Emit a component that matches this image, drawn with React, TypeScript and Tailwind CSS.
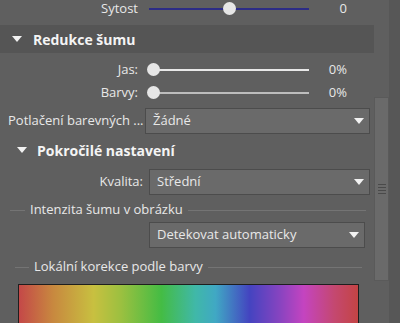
function Caret() {
  return (
    <svg width="10" height="6" viewBox="0 0 10 6" className="shrink-0">
      <path d="M0 0h10L5 6z" fill="#f2f2f2" />
    </svg>
  );
}

function Slider({ pos, line }: { pos: number; line: string }) {
  return (
    <div className="relative h-[14px] w-[162px]">
      <div className={`absolute left-[2px] right-0 top-[6px] h-[2px] ${line}`} />
      <div
        className="absolute top-0 h-[13px] w-[13px] rounded-full bg-[#e6e6e6]"
        style={{ left: pos }}
      />
    </div>
  );
}

function SliderRow({ label, value, pos, line }: { label: string; value: string; pos: number; line: string }) {
  return (
    <div className="flex h-[20px] items-center">
      <div className="w-[140px] pr-[2px] text-right">{label}</div>
      <div className="ml-[7px]">
        <Slider pos={pos} line={line} />
      </div>
      <div className="w-[38px] text-right">{value}</div>
    </div>
  );
}

function Dropdown({ text, className }: { text: string; className: string }) {
  return (
    <div
      className={`flex h-[26px] items-center justify-between border border-[#4c4c4c] bg-[#6a6a6a] pl-[7px] pr-[5px] ${className}`}
    >
      <span>{text}</span>
      <Caret />
    </div>
  );
}

function Divider({ title, lead, className }: { title: string; lead: string; className: string }) {
  return (
    <div className={`flex h-[20px] items-center ${className}`}>
      <div className={`h-px bg-[#747474] ${lead}`} />
      <span className="px-[5px]">{title}</span>
      <div className="h-px flex-1 bg-[#747474]" />
    </div>
  );
}

export default function App() {
  return (
    <div
      className="flex h-[323px] w-[400px] overflow-hidden bg-[#5f5f5f] text-[13px] text-[#e8e8e8]"
      style={{ fontFamily: '"Open Sans", "Noto Sans", sans-serif' }}
    >
      <div className="w-[374px] shrink-0">
        <div className="-mt-[1px]">
          <SliderRow label="Sytost" value="0" pos={76} line="bg-[#2c2c86]" />
        </div>
        <div className="mt-[6px] flex h-[28px] items-center bg-[#555555] pl-[12px]">
          <Caret />
          <span className="ml-[11px] text-[14px] font-bold text-[#f4f4f4]">Redukce šumu</span>
        </div>
        <div className="mt-[7px]">
          <SliderRow label="Jas:" value="0%" pos={0} line="bg-[#e8e8e8]" />
          <div className="mt-[3px]">
            <SliderRow label="Barvy:" value="0%" pos={0} line="bg-[#bdbdbd]" />
          </div>
        </div>
        <div className="mt-[5px] flex items-center">
          <div className="w-[141px] pl-[8px] whitespace-nowrap">Potlačení barevných ...</div>
          <Dropdown text="Žádné" className="ml-[4px] w-[225px]" />
        </div>
        <div className="mt-[6px] flex h-[20px] items-center pl-[17px]">
          <Caret />
          <span className="ml-[10px] text-[14px] font-bold text-[#f4f4f4]">Pokročilé nastavení</span>
        </div>
        <div className="mt-[9px] flex items-center">
          <div className="w-[143px] text-right">Kvalita:</div>
          <Dropdown text="Střední" className="ml-[6px] w-[221px]" />
        </div>
        <Divider title="Intenzita šumu v obrázku" lead="ml-[10px] w-[15px]" className="mt-[5px] mr-[8px]" />
        <div className="mt-[2px] flex">
          <Dropdown text="Detekovat automaticky" className="ml-[149px] w-[216px]" />
        </div>
        <Divider title="Lokální korekce podle barvy" lead="ml-[15px] w-[14px]" className="mt-[9px] mr-[12px]" />
        <div
          className="ml-[18px] mt-[7px] h-[60px] w-[341px] border border-[#1e1e1e]"
          style={{
            background:
              'linear-gradient(to right, #c44848, #c8883f 10%, #c8c040 22%, #9cc040 30%, #44bc44 42%, #40b8a8 52%, #40a8c4 58%, #4444c0 68%, #8844c0 77%, #c444c0 84%, #c44870 93%, #c44444)',
          }}
        />
      </div>
      <div className="flex w-[15px] shrink-0 flex-col">
        <div className="h-[97px]" />
        <div className="flex h-[184px] flex-col items-center justify-center gap-[2px] border border-[#5a5a5a] bg-[#6a6a6a]">
          <div className="h-px w-[8px] bg-[#4a4a4a]" />
          <div className="h-px w-[8px] bg-[#4a4a4a]" />
          <div className="h-px w-[8px] bg-[#4a4a4a]" />
          <div className="h-px w-[8px] bg-[#4a4a4a]" />
        </div>
      </div>
      <div className="flex-1 bg-[#575757]" />
    </div>
  );
}
